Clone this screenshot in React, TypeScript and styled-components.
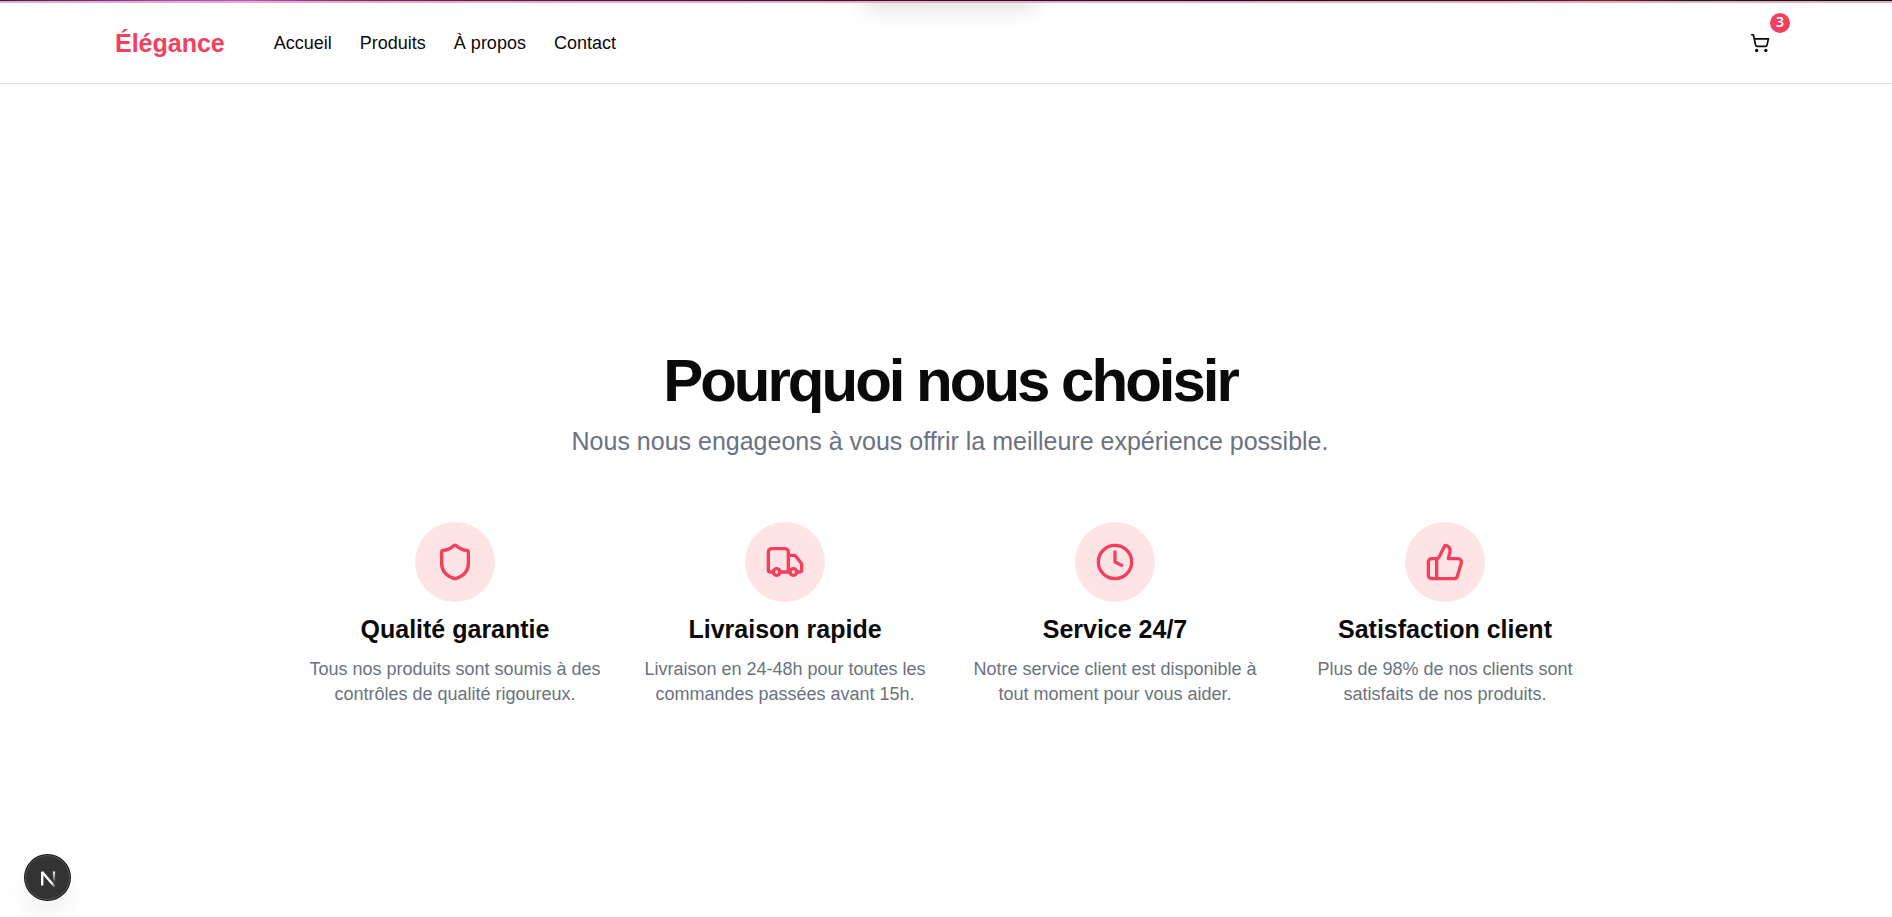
import React from "react";
import styled, { createGlobalStyle } from "styled-components";
import { Clock, Shield, ShoppingCart, ThumbsUp, Truck, type LucideIcon } from "lucide-react";

const rose = "#f43f5e";
const ink = "#0a0a0a";
const muted = "#6b7280";

const GlobalStyle = createGlobalStyle`
  *, *::before, *::after { box-sizing: border-box; }
  body {
    margin: 0;
    background: #fff;
    color: ${ink};
    font-family: "Liberation Sans", Arial, sans-serif;
  }
  h2, h3, p { margin: 0; }
`;

const Page = styled.div`
  min-height: 100vh;
  display: flex;
  flex-direction: column;
`;

const HeroEdge = styled.div`
  height: 3px;
  border-bottom: 2px solid #d9b3bf;
  background: linear-gradient(
    90deg,
    #4a1259 0%,
    #8a2a9c 6%,
    #b93fd0 9%,
    #d245dc 13%,
    #a3268f 17%,
    #7a1a5c 22%,
    #5c0f3c 32%,
    #4d0a2c 45%,
    #3a0a28 55%,
    #2a0620 65%,
    #4a0a20 80%,
    #8a1a2c 85%,
    #2a1420 89%,
    #14060f 100%
  );
`;

const Header = styled.header`
  position: relative;
  overflow: hidden;
  padding-left: 8px;
  border-bottom: 1px solid #e5e5e5;
`;

const HeroShadow = styled.div`
  position: absolute;
  bottom: 100%;
  left: 50%;
  width: 180px;
  height: 40px;
  margin-left: -86px;
  border-radius: 8px;
  box-shadow: 0 8px 24px -4px rgba(0, 0, 0, 0.14);
`;

const HeaderInner = styled.div`
  display: flex;
  align-items: center;
  max-width: 1750px;
  height: 80px;
  margin: 0 auto;
  padding: 0 40px;
`;

const Logo = styled.a`
  margin-right: 49px;
  color: ${rose};
  font-size: 25px;
  font-weight: 700;
  text-decoration: none;
`;

const Nav = styled.nav`
  display: flex;
  gap: 28px;
`;

const NavLink = styled.a`
  color: ${ink};
  font-size: 18px;
  line-height: 25px;
  text-decoration: none;
`;

const CartButton = styled.button`
  position: relative;
  display: grid;
  place-items: center;
  width: 50px;
  height: 50px;
  margin-left: auto;
  padding: 0;
  border: 0;
  border-radius: 8px;
  background: none;
  color: ${ink};
  cursor: pointer;
`;

const CartCount = styled.span`
  position: absolute;
  top: -5px;
  right: -5px;
  width: 20px;
  height: 20px;
  border-radius: 50%;
  background: ${rose};
  color: #fff;
  font-family: "Noto Sans", sans-serif;
  font-size: 14px;
  font-weight: 600;
  line-height: 18px;
  text-align: center;
`;

const Reasons = styled.section`
  display: flex;
  flex-direction: column;
  align-items: center;
  gap: 61px;
  padding: 267px 0 80px 8px;
`;

const Intro = styled.div`
  display: flex;
  flex-direction: column;
  gap: 10px;
  text-align: center;
`;

const Title = styled.h2`
  font-size: 60px;
  font-weight: 700;
  line-height: 60px;
  letter-spacing: -3px;
`;

const Lead = styled.p`
  color: ${muted};
  font-size: 25px;
  line-height: 40px;
`;

const Grid = styled.div`
  display: grid;
  grid-template-columns: repeat(4, 1fr);
  gap: 30px;
  width: 100%;
  max-width: 1290px;
`;

const Card = styled.article`
  display: flex;
  flex-direction: column;
  align-items: center;
  gap: 10px;
  text-align: center;
`;

const IconDisc = styled.div`
  display: grid;
  place-items: center;
  width: 80px;
  height: 80px;
  border-radius: 50%;
  background: #ffe4e6;
  color: ${rose};
`;

const CardTitle = styled.h3`
  font-size: 25px;
  font-weight: 700;
  line-height: 35px;
`;

const CardText = styled.p`
  color: ${muted};
  font-size: 18px;
  line-height: 25px;
`;

const DevBadge = styled.button`
  position: fixed;
  bottom: 17px;
  left: 25px;
  display: grid;
  place-items: center;
  width: 45px;
  height: 45px;
  padding: 0;
  border: 1px solid #555;
  border-radius: 50%;
  background: #333;
  box-shadow: 0 0 0 1px #171717, 0 16px 32px -8px rgba(0, 0, 0, 0.14);
`;

const links = ["Accueil", "Produits", "À propos", "Contact"];

const reasons: { icon: LucideIcon; title: string; text: string }[] = [
  { icon: Shield, title: "Qualité garantie", text: "Tous nos produits sont soumis à des contrôles de qualité rigoureux." },
  { icon: Truck, title: "Livraison rapide", text: "Livraison en 24-48h pour toutes les commandes passées avant 15h." },
  { icon: Clock, title: "Service 24/7", text: "Notre service client est disponible à tout moment pour vous aider." },
  { icon: ThumbsUp, title: "Satisfaction client", text: "Plus de 98% de nos clients sont satisfaits de nos produits." },
];

export default function App() {
  return (
    <Page>
      <GlobalStyle />
      <HeroEdge />
      <Header>
        <HeroShadow />
        <HeaderInner>
          <Logo href="#">Élégance</Logo>
          <Nav>
            {links.map((label) => (
              <NavLink key={label} href="#">{label}</NavLink>
            ))}
          </Nav>
          <CartButton aria-label="Panier">
            <ShoppingCart size={20} />
            <CartCount>3</CartCount>
          </CartButton>
        </HeaderInner>
      </Header>
      <main>
        <Reasons>
          <Intro>
            <Title>Pourquoi nous choisir</Title>
            <Lead>Nous nous engageons à vous offrir la meilleure expérience possible.</Lead>
          </Intro>
          <Grid>
            {reasons.map(({ icon: Icon, title, text }) => (
              <Card key={title}>
                <IconDisc><Icon size={40} /></IconDisc>
                <CardTitle>{title}</CardTitle>
                <CardText>{text}</CardText>
              </Card>
            ))}
          </Grid>
        </Reasons>
      </main>
      <DevBadge aria-label="Next.js">
        <svg width="22" height="22" viewBox="0 0 22 22" fill="none">
          <defs>
            <linearGradient id="diagonal" x1="10" y1="11" x2="18" y2="21" gradientUnits="userSpaceOnUse">
              <stop stopColor="#fff" />
              <stop offset="0.5" stopColor="#fff" />
              <stop offset="1" stopColor="#fff" stopOpacity="0" />
            </linearGradient>
            <linearGradient id="stem" x1="17" y1="4" x2="17" y2="16" gradientUnits="userSpaceOnUse">
              <stop stopColor="#fff" />
              <stop offset="1" stopColor="#fff" stopOpacity="0" />
            </linearGradient>
          </defs>
          <path d="M18 20 5.2 5V18.5" stroke="url(#diagonal)" strokeWidth="2.4" strokeLinejoin="bevel" />
          <path d="M17 4.5v13" stroke="url(#stem)" strokeWidth="2.2" />
        </svg>
      </DevBadge>
    </Page>
  );
}
